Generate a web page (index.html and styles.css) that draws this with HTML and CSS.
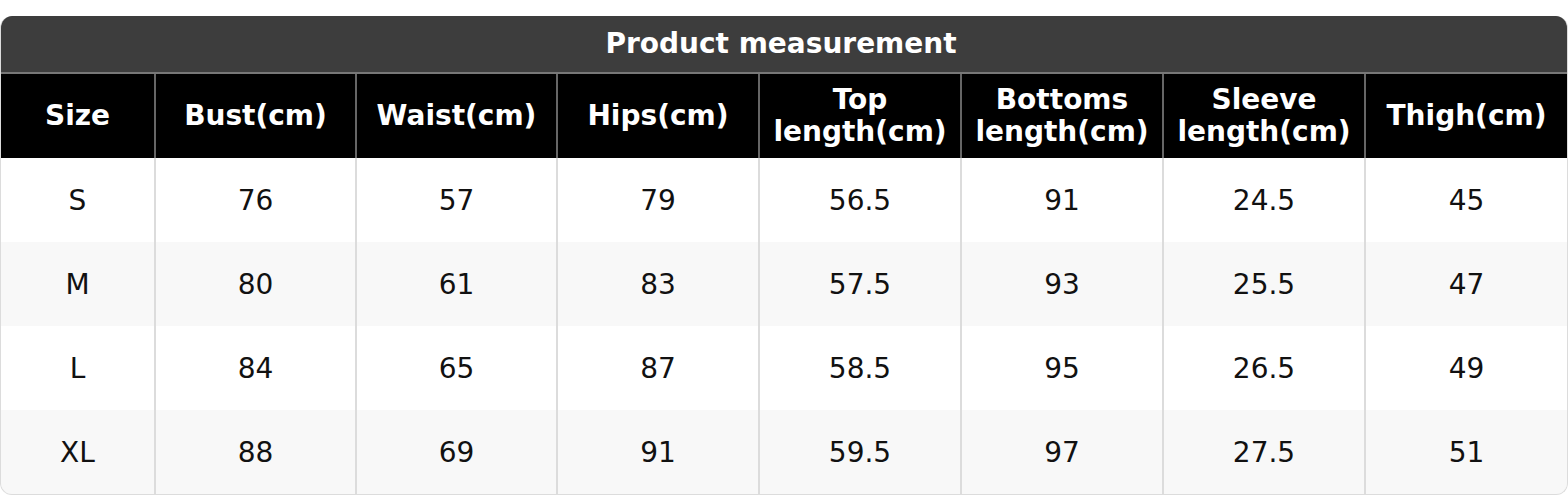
FILE: index.html
```html
<!DOCTYPE html>
<html>
<head>
<meta charset="utf-8">
<link rel="stylesheet" href="styles.css">
</head>
<body>
<div class="card">
  <div class="title">Product measurement</div>
  <div class="row head">
    <div class="cell">Size</div>
    <div class="cell">Bust(cm)</div>
    <div class="cell">Waist(cm)</div>
    <div class="cell">Hips(cm)</div>
    <div class="cell">Top<br>length(cm)</div>
    <div class="cell">Bottoms<br>length(cm)</div>
    <div class="cell">Sleeve<br>length(cm)</div>
    <div class="cell">Thigh(cm)</div>
  </div>
  <div class="row body">
    <div class="cell">S</div><div class="cell">76</div><div class="cell">57</div><div class="cell">79</div><div class="cell">56.5</div><div class="cell">91</div><div class="cell">24.5</div><div class="cell">45</div>
  </div>
  <div class="row body alt">
    <div class="cell">M</div><div class="cell">80</div><div class="cell">61</div><div class="cell">83</div><div class="cell">57.5</div><div class="cell">93</div><div class="cell">25.5</div><div class="cell">47</div>
  </div>
  <div class="row body">
    <div class="cell">L</div><div class="cell">84</div><div class="cell">65</div><div class="cell">87</div><div class="cell">58.5</div><div class="cell">95</div><div class="cell">26.5</div><div class="cell">49</div>
  </div>
  <div class="row body alt">
    <div class="cell">XL</div><div class="cell">88</div><div class="cell">69</div><div class="cell">91</div><div class="cell">59.5</div><div class="cell">97</div><div class="cell">27.5</div><div class="cell">51</div>
  </div>
</div>
</body>
</html>
```
FILE: styles.css
```css
html, body {
  margin: 0;
  padding: 0;
  background: #fff;
}
body {
  padding-top: 16px;
  font-family: "DejaVu Sans", Verdana, sans-serif;
}
.card {
  width: 1568px;
  box-sizing: border-box;
  border: 1px solid #dcdcdc;
  border-top: 0;
  border-radius: 12px;
  overflow: hidden;
}
.title {
  height: 58px;
  box-sizing: border-box;
  padding-bottom: 2px;
  padding-right: 6px;
  background: #3d3d3d;
  color: #fff;
  font-weight: bold;
  font-size: 28px;
  display: flex;
  align-items: center;
  justify-content: center;
  border-bottom: 2px solid #777;
}
.row {
  display: grid;
  grid-template-columns: 153px 199px 199px 200px 200px 200px 200px 1fr;
  column-gap: 2px;
}
.cell {
  display: flex;
  align-items: center;
  justify-content: center;
  text-align: center;
}
.head {
  background: #666;
  height: 84px;
}
.head .cell {
  background: #000;
  color: #fff;
  font-weight: bold;
  font-size: 28px;
  line-height: 32px;
}
.body {
  background: #dcdcdc;
  height: 84px;
}
.body .cell {
  background: #fff;
  color: #111;
  font-size: 28px;
}
.body.alt .cell {
  background: #f8f8f8;
}
```
